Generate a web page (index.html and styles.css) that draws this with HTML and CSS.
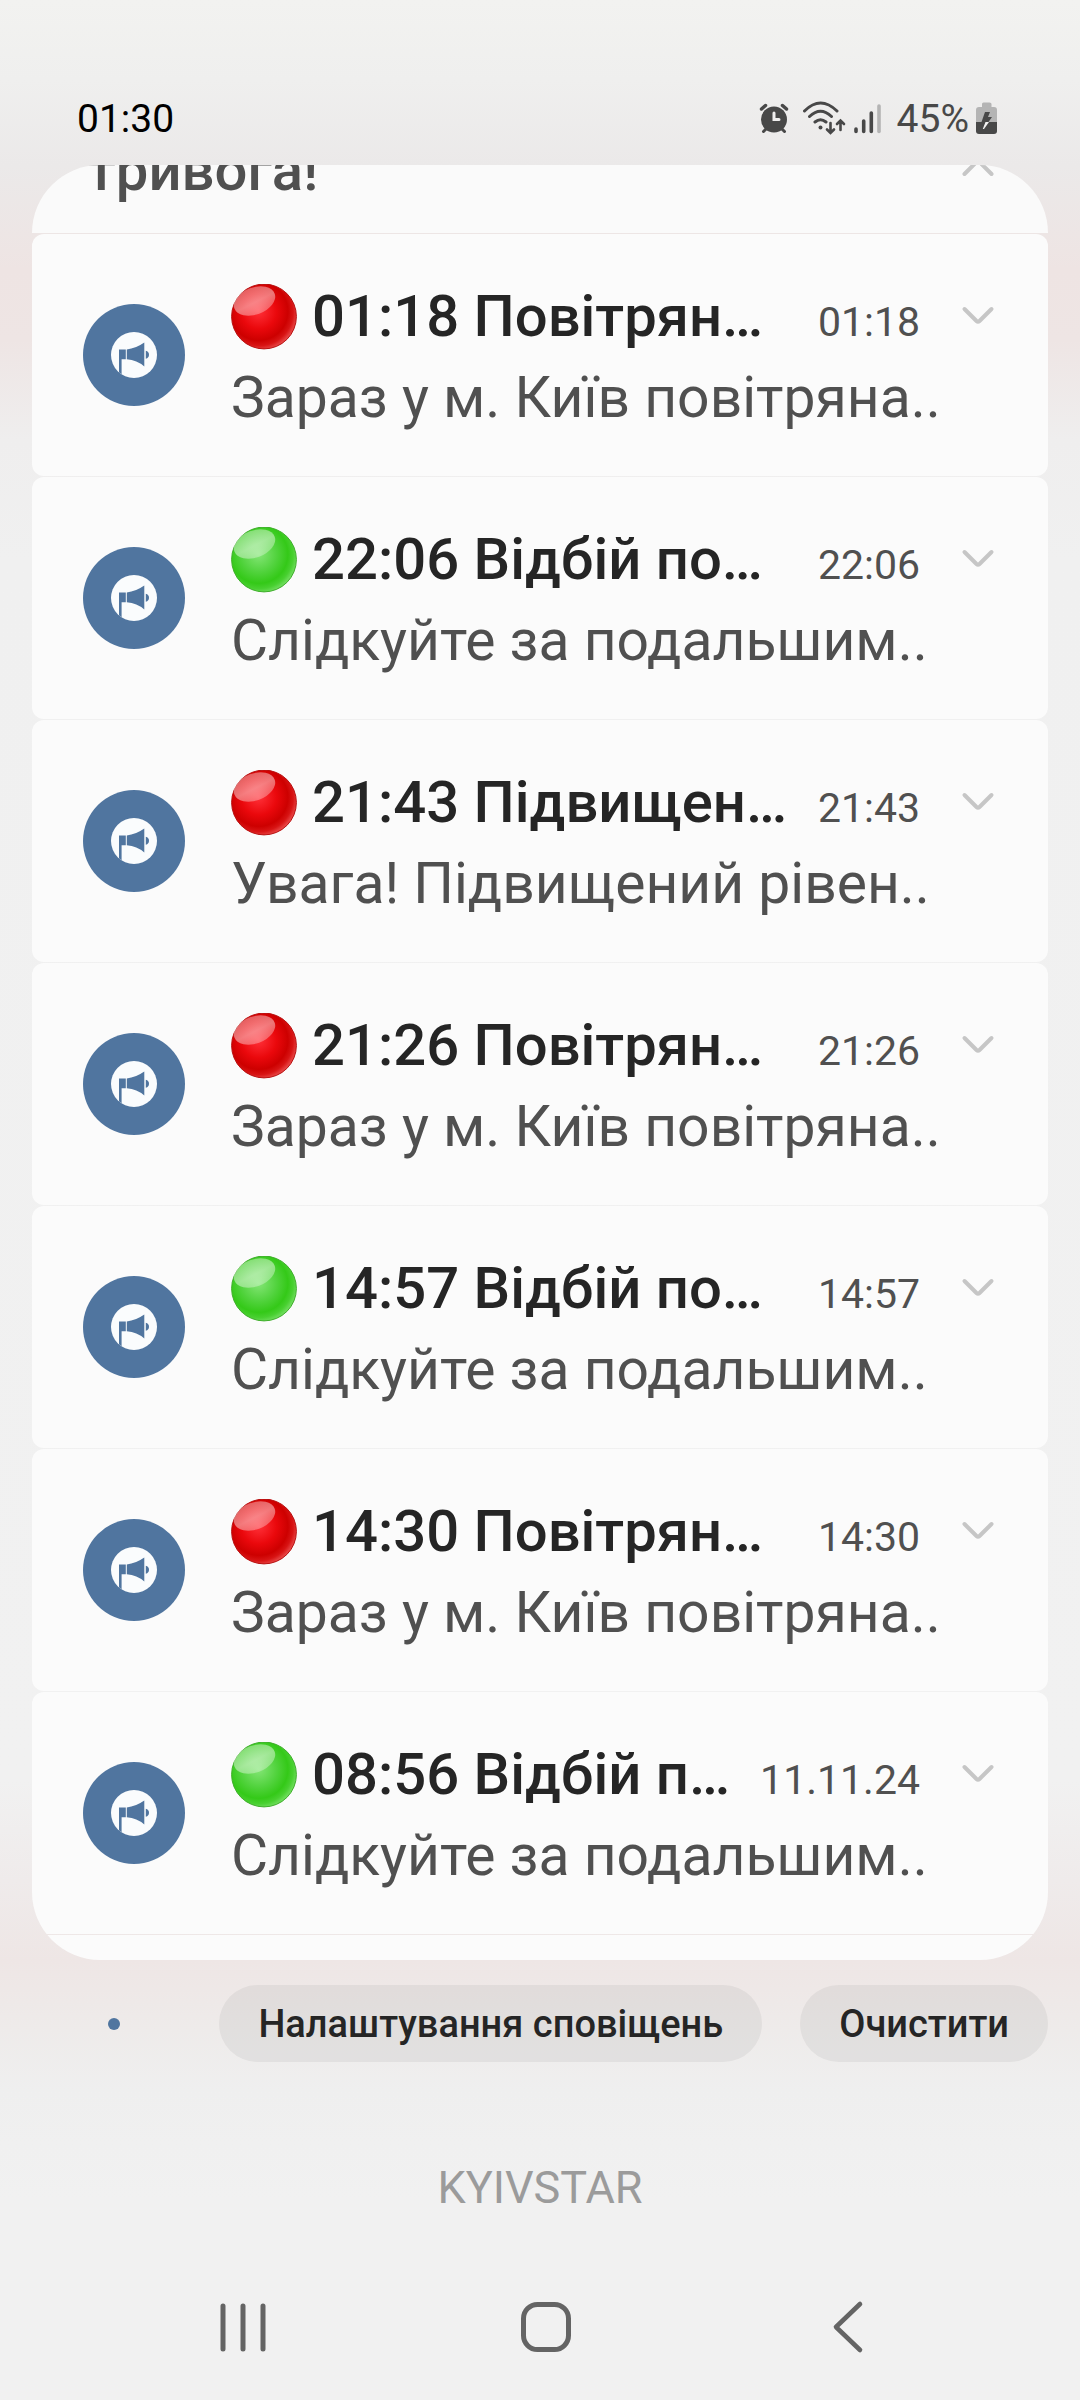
FILE: index.html
```html
<!DOCTYPE html>
<html lang="uk">
<head>
<meta charset="utf-8">
<meta name="viewport" content="width=device-width, initial-scale=1">
<title>Сповіщення</title>
<link rel="stylesheet" href="styles.css">
</head>
<body>
<svg class="defs" width="0" height="0" aria-hidden="true">
  <defs>
    <radialGradient id="redFill" cx=".42" cy=".42" r=".68">
      <stop offset="0" stop-color="#ff3038"/><stop offset=".4" stop-color="#ea080c"/><stop offset=".66" stop-color="#cd0000"/><stop offset=".78" stop-color="#d81414"/><stop offset="1" stop-color="#fb8080"/>
    </radialGradient>
    <radialGradient id="greenFill" cx=".42" cy=".42" r=".68">
      <stop offset="0" stop-color="#84e576"/><stop offset=".4" stop-color="#52d33e"/><stop offset=".66" stop-color="#34c918"/><stop offset=".78" stop-color="#48d030"/><stop offset="1" stop-color="#9cec90"/>
    </radialGradient>
    <linearGradient id="shine" x1=".4" y1="0" x2=".6" y2="1">
      <stop offset="0" stop-color="#fff" stop-opacity=".36"/><stop offset=".55" stop-color="#fff" stop-opacity=".46"/><stop offset="1" stop-color="#fff" stop-opacity=".3"/>
    </linearGradient>
    <symbol id="red" viewBox="0 0 66 66">
      <circle cx="33" cy="32.500" r="32.400" fill="url(#redFill)" stroke="#b81010"/>
      <ellipse cx="23.500" cy="17" rx="21.500" ry="13.500" transform="rotate(-20 23.500 17)" fill="url(#shine)"/>
    </symbol>
    <symbol id="green" viewBox="0 0 66 66">
      <circle cx="33" cy="32.500" r="32.400" fill="url(#greenFill)" stroke="#3fae2b"/>
      <ellipse cx="23.500" cy="17" rx="21.500" ry="13.500" transform="rotate(-20 23.500 17)" fill="url(#shine)"/>
    </symbol>
    <symbol id="horn" viewBox="0 0 102 102">
      <circle cx="51" cy="51" r="51" fill="#50759f"/>
      <circle cx="51" cy="51" r="23" fill="#fafcfd"/>
      <path fill="#50759f" d="M36 45.500h6.800v9.700h-4.200v15l-2.600-2zM43.800 45.500Q53 44.500 61.300 38.600v23.800Q54 56 43.800 55.200zM62.800 46.800q3.200.8 3.200 4t-3.200 4z"/>
    </symbol>
    <symbol id="down" viewBox="0 0 38 38">
      <path d="M5.500 11 17.500 23q1.500 1.500 3 0L32.500 11" fill="none" stroke="#c6c6c6" stroke-width="4" stroke-linecap="round"/>
    </symbol>
  </defs>
</svg>

<div class="screen">
  <header class="status">
    <time class="clock">01:30</time>
    <div class="indicators">
      <svg width="32" height="32" viewBox="0 0 32 32" fill="none" stroke="#484848" stroke-linecap="round">
        <circle cx="16" cy="17.500" r="13" fill="#484848" stroke="none"/>
        <path d="M3.500 7 7.500 3.500M28.500 7l-4-3.500" stroke-width="3.500"/>
        <path d="M5.500 29.500l3-3M26.500 29.500l-3-3" stroke-width="3"/>
        <path d="M16 11v6.500h5" stroke="#efeeee" stroke-width="3"/>
      </svg>
      <svg class="wifi" width="44" height="34" viewBox="0 0 44 34" fill="none" stroke="#484848" stroke-width="3" stroke-linecap="round">
        <path d="M2.500 10Q18.500-6 35 10M7.500 15.500q11-10.500 22 0M13 21q5.500-4.500 11 0"/>
        <circle cx="18.500" cy="26.500" r="2" fill="#484848" stroke="none"/>
        <path d="M28.500 22v9M25 28.500l3.500 3.500 3.500-3.500M38.500 29v-9M35 23l3.500-3.500L42 23" stroke-width="2.600"/>
      </svg>
      <svg class="signal" width="28" height="32" viewBox="0 0 28 32" fill="none" stroke="#484848" stroke-width="3.600" stroke-linecap="round">
        <path d="M2 27v2.500M9.700 19v10.500M17.300 11v18.500"/><path d="M25 4v25.500" stroke="#b4b4b4"/>
      </svg>
      <span class="percent">45%</span>
      <svg width="22" height="34" viewBox="0 0 22 34">
        <path fill="#b4b4b4" d="M6 5V3q0-1.500 1.500-1.500h6Q15.500 1.500 15.500 3v3H18q3 0 3 3v12.500H0V9q0-3 3-3h3z"/>
        <path fill="#484848" d="M0 21h21v9q0 3-3 3H3q-3 0-3-3z"/>
        <path fill="#484848" d="M9 11h5l-2 5h4l-3.500 5H5.500z"/>
        <path fill="#f2f2f2" d="M9.500 21h3.500l-5 7H6.800z"/>
      </svg>
    </div>
  </header>

  <main class="panel">
    <section class="previous">
      <h2 class="previous-title">тривога!</h2>
      <button class="toggle collapse" type="button" aria-label="Згорнути"><svg class="flip" width="38" height="38"><use href="#down"/></svg></button>
    </section>
    <article class="card">
      <svg class="avatar"><use href="#horn"/></svg>
      <div class="content">
        <div class="head"><svg class="ball"><use href="#red"/></svg><h2 class="title">01:18 Повітрян…</h2><time class="when">01:18</time><button class="toggle" type="button" aria-label="Розгорнути"><svg width="38" height="38"><use href="#down"/></svg></button></div>
        <p class="text">Зараз у м. Київ повітряна..</p>
      </div>
    </article>
    <article class="card">
      <svg class="avatar"><use href="#horn"/></svg>
      <div class="content">
        <div class="head"><svg class="ball"><use href="#green"/></svg><h2 class="title">22:06 Відбій по…</h2><time class="when">22:06</time><button class="toggle" type="button" aria-label="Розгорнути"><svg width="38" height="38"><use href="#down"/></svg></button></div>
        <p class="text">Слідкуйте за подальшим..</p>
      </div>
    </article>
    <article class="card">
      <svg class="avatar"><use href="#horn"/></svg>
      <div class="content">
        <div class="head"><svg class="ball"><use href="#red"/></svg><h2 class="title">21:43 Підвищен…</h2><time class="when">21:43</time><button class="toggle" type="button" aria-label="Розгорнути"><svg width="38" height="38"><use href="#down"/></svg></button></div>
        <p class="text">Увага! Підвищений рівен..</p>
      </div>
    </article>
    <article class="card">
      <svg class="avatar"><use href="#horn"/></svg>
      <div class="content">
        <div class="head"><svg class="ball"><use href="#red"/></svg><h2 class="title">21:26 Повітрян…</h2><time class="when">21:26</time><button class="toggle" type="button" aria-label="Розгорнути"><svg width="38" height="38"><use href="#down"/></svg></button></div>
        <p class="text">Зараз у м. Київ повітряна..</p>
      </div>
    </article>
    <article class="card">
      <svg class="avatar"><use href="#horn"/></svg>
      <div class="content">
        <div class="head"><svg class="ball"><use href="#green"/></svg><h2 class="title">14:57 Відбій по…</h2><time class="when">14:57</time><button class="toggle" type="button" aria-label="Розгорнути"><svg width="38" height="38"><use href="#down"/></svg></button></div>
        <p class="text">Слідкуйте за подальшим..</p>
      </div>
    </article>
    <article class="card">
      <svg class="avatar"><use href="#horn"/></svg>
      <div class="content">
        <div class="head"><svg class="ball"><use href="#red"/></svg><h2 class="title">14:30 Повітрян…</h2><time class="when">14:30</time><button class="toggle" type="button" aria-label="Розгорнути"><svg width="38" height="38"><use href="#down"/></svg></button></div>
        <p class="text">Зараз у м. Київ повітряна..</p>
      </div>
    </article>
    <article class="card last">
      <svg class="avatar"><use href="#horn"/></svg>
      <div class="content">
        <div class="head"><svg class="ball"><use href="#green"/></svg><h2 class="title">08:56 Відбій п…</h2><time class="when">11.11.24</time><button class="toggle" type="button" aria-label="Розгорнути"><svg width="38" height="38"><use href="#down"/></svg></button></div>
        <p class="text">Слідкуйте за подальшим..</p>
      </div>
    </article>
    <div class="tail"></div>
  </main>

  <div class="actions">
    <span class="dot"></span>
    <button class="pill" type="button">Налаштування сповіщень</button>
    <button class="pill" type="button">Очистити</button>
  </div>

  <p class="carrier">KYIVSTAR</p>

  <nav class="nav">
    <button type="button" aria-label="Останні"><svg width="60" height="60" viewBox="0 0 60 60" fill="none" stroke="#646464" stroke-width="5" stroke-linecap="round"><path d="M10 9v43M30 9v43M50 9v43"/></svg></button>
    <button type="button" aria-label="Головний екран"><svg width="60" height="60" viewBox="0 0 60 60" fill="none" stroke="#646464" stroke-width="5"><rect x="7.500" y="7.500" width="45" height="45" rx="14"/></svg></button>
    <button type="button" aria-label="Назад"><svg width="60" height="60" viewBox="0 0 60 60" fill="none" stroke="#646464" stroke-width="4.600" stroke-linecap="round" stroke-linejoin="round"><path d="M42 7 18 30l24 23"/></svg></button>
  </nav>
</div>
</body>
</html>
```
FILE: styles.css
```css
* { box-sizing: border-box; }

body {
  margin: 0;
  font-family: Roboto, "Noto Sans", sans-serif;
  color: #252525;
}

h2, p { margin: 0; font-weight: 400; }

button {
  border: 0;
  padding: 0;
  background: none;
  font: inherit;
  color: inherit;
}

svg { display: block; flex: none; }
.defs { position: absolute; }

.screen {
  min-height: 100vh;
  padding: 0 32px;
  display: flex;
  flex-direction: column;
  background: linear-gradient(#f2f2f0 0, #efefee 80px, #ebe9e9 165px, #eee4e3 270px, #eee5e4 340px, #efeeee 440px, #f0f0f0 560px, #f1f1f1 1780px, #efebeb 1880px, #eee6e5 1960px, #eeebea 2030px, #efefef 2090px, #f1f1f1 2200px);
}

.status {
  display: flex;
  justify-content: space-between;
  align-items: center;
  height: 165px;
  padding: 70px 50px 0 45px;
}
.clock { padding-top: 2px; font-size: 39px; line-height: 48px; color: #000; }
.indicators { display: flex; align-items: center; }
.wifi { margin-left: 12px; }
.signal { margin-left: 8px; }
.percent { margin: 0 7px 0 15px; padding-top: 2px; font-size: 39px; line-height: 48px; color: #484848; }

.panel {
  display: flex;
  flex-direction: column;
  gap: 1px;
  border-radius: 68px;
  overflow: hidden;
}
.previous {
  display: flex;
  justify-content: space-between;
  align-items: flex-end;
  height: 68px;
  padding: 0 51px 22px 55px;
  background: #fafafa;
}
.previous-title { font-size: 58px; line-height: 81px; font-weight: 500; color: #505050; }
.flip { transform: scaleY(-1); }

.card {
  display: flex;
  align-items: center;
  gap: 46px;
  padding: 0 51px;
  border-radius: 12px;
  background: #fbfbfb;
}
.card.last { border-radius: 12px 12px 0 0; }
.avatar { width: 102px; height: 102px; }
.content { flex: 1; min-width: 0; padding: 42px 0 38px; }
.head { display: flex; align-items: baseline; }
.ball { width: 66px; height: 66px; margin-right: 15px; align-self: center; }
.title { font-size: 58px; line-height: 81px; font-weight: 500; white-space: nowrap; }
.when { margin-left: auto; font-size: 41px; line-height: 40px; color: #505050; }
.toggle { margin-left: 39px; align-self: center; }
.collapse { align-self: flex-end; margin-bottom: 26px; }
.text { font-size: 57px; line-height: 81px; color: #505050; white-space: nowrap; }
.tail { height: 25px; background: #fbfbfb; }

.actions {
  display: flex;
  align-items: center;
  gap: 38px;
  margin-top: 25px;
}
.dot {
  width: 12px;
  height: 12px;
  margin: 0 auto 0 76px;
  border-radius: 50%;
  background: #50759f;
}
.pill {
  padding: 2px 39px 0;
  border-radius: 39px;
  background: rgba(0, 0, 0, .05);
  font-size: 38px;
  line-height: 75px;
  font-weight: 500;
}

.carrier {
  margin-top: 99px;
  font-size: 45px;
  line-height: 54px;
  text-align: center;
  color: #9b9b9b;
}

.nav {
  display: flex;
  justify-content: space-between;
  margin: auto 0 43px;
  padding: 0 170px 0 181px;
}
```
